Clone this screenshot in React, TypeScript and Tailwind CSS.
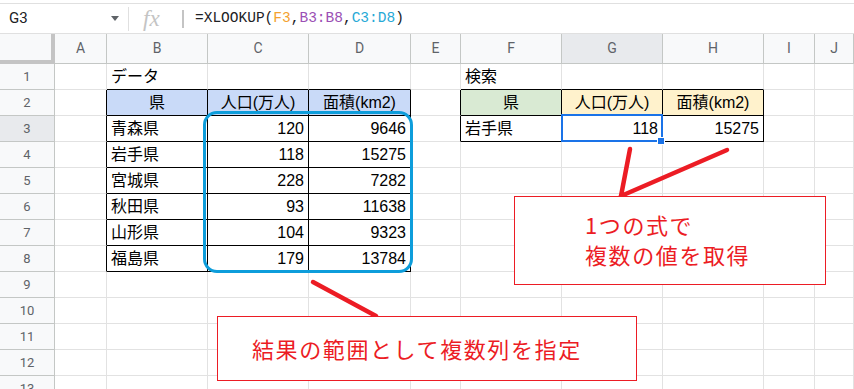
import React from "react";

const cols = ["A", "B", "C", "D", "E", "F", "G", "H", "I", "J"];

type Cell = { text: string; align?: "left" | "center" | "right"; bg?: string };

const cells: Record<string, Cell> = {
  B1: { text: "データ" },
  F1: { text: "検索" },
  B2: { text: "県", align: "center", bg: "bg-[#c9daf8]" },
  C2: { text: "人口(万人)", align: "center", bg: "bg-[#c9daf8]" },
  D2: { text: "面積(km2)", align: "center", bg: "bg-[#c9daf8]" },
  F2: { text: "県", align: "center", bg: "bg-[#d9ead3]" },
  G2: { text: "人口(万人)", align: "center", bg: "bg-[#fff2cc]" },
  H2: { text: "面積(km2)", align: "center", bg: "bg-[#fff2cc]" },
  F3: { text: "岩手県" },
  G3: { text: "118", align: "right" },
  H3: { text: "15275", align: "right" },
};

const prefs = ["青森県", "岩手県", "宮城県", "秋田県", "山形県", "福島県"];
const pops = ["120", "118", "228", "93", "104", "179"];
const areas = ["9646", "15275", "7282", "11638", "9323", "13784"];
prefs.forEach((p, i) => {
  cells["B" + (i + 3)] = { text: p };
  cells["C" + (i + 3)] = { text: pops[i], align: "right" };
  cells["D" + (i + 3)] = { text: areas[i], align: "right" };
});

// c: 1 = A ... 10 = J
function inTable(r: number, c: number) {
  if (r >= 2 && r <= 8 && c >= 2 && c <= 4) return true;
  if (r >= 2 && r <= 3 && c >= 6 && c <= 8) return true;
  return false;
}

function GridCell({ r, c }: { r: number; c: number }) {
  const cell = cells[cols[c - 1] + r];
  const right = inTable(r, c) || inTable(r, c + 1) ? "border-r-black" : "border-r-[#e2e2e2]";
  const bottom = inTable(r, c) || inTable(r + 1, c) ? "border-b-black" : "border-b-[#e2e2e2]";
  const align =
    cell?.align === "center" ? "justify-center" : cell?.align === "right" ? "justify-end" : "justify-start";
  return (
    <div
      className={`h-[26px] border-r border-b ${right} ${bottom} ${cell?.bg ?? "bg-white"} flex items-center ${align} px-[4px] text-[16px] text-black whitespace-nowrap overflow-visible`}
    >
      {cell?.text}
    </div>
  );
}

export default function App() {
  const rows = Array.from({ length: 13 }, (_, i) => i + 1);
  return (
    <div
      className="relative w-[854px] h-[389px] overflow-hidden bg-white"
      style={{ fontFamily: '"Liberation Sans", Arial, "Noto Sans CJK JP", sans-serif' }}
    >
      {/* formula bar */}
      <div className="mt-[3px] h-[31px] border-t border-b border-[#e0e0e0] flex items-center">
        <div className="w-[128px] h-full flex items-center justify-between pl-[9px] pr-[9px] font-['Roboto',sans-serif] text-[15px] text-[#202124]">
          <span>G3</span>
          <span className="w-0 h-0 border-x-[4px] border-x-transparent border-t-[5px] border-t-[#5f6368]" />
        </div>
        <div className="w-px h-[24px] bg-[#e0e0e0]" />
        <div className="ml-[14px] w-[24px] font-['Liberation_Serif',serif] italic text-[23px] leading-none text-[#c4c4c4]">
          fx
        </div>
        <div className="ml-[15px] w-[2px] h-[18px] bg-[#c4c4c4]" />
        <div className="ml-[11px] font-['Liberation_Mono',monospace] text-[14.5px] text-[#202124] whitespace-nowrap">
          =XLOOKUP(<span className="text-[#f4a12f]">F3</span>,<span className="text-[#9b4fb4]">B3:B8</span>,
          <span className="text-[#27a9d6]">C3:D8</span>)
        </div>
      </div>

      {/* grid */}
      <div className="grid grid-cols-[55px_52px_101px_101px_102px_50px_101px_101px_101px_51px_1fr]">
        <div className="h-[30px] bg-[#f8f9fa] border-r-4 border-b-4 border-[#c4c4c4]" />
        {cols.map((c) => (
          <div
            key={c}
            className={`h-[30px] border-r border-b border-[#c4c7c5] flex items-center justify-center font-['Roboto',sans-serif] text-[14px] text-[#5f6368] ${
              c === "G" ? "bg-[#e8eaed]" : "bg-[#f8f9fa]"
            }`}
          >
            {c}
          </div>
        ))}
        {rows.map((r) => (
          <React.Fragment key={r}>
            <div
              className={`h-[26px] border-r border-b border-[#c4c7c5] flex items-center justify-center font-['Roboto',sans-serif] text-[13px] text-[#5f6368] ${
                r === 3 ? "bg-[#e8eaed]" : "bg-[#f8f9fa]"
              }`}
            >
              {r}
            </div>
            {cols.map((_, ci) => (
              <GridCell key={ci} r={r} c={ci + 1} />
            ))}
          </React.Fragment>
        ))}
      </div>

      {/* selected cell G3 */}
      <div className="absolute left-[561px] top-[114px] w-[102px] h-[28px] border-2 border-[#1a73e8]" />
      <div className="absolute left-[657px] top-[137px] w-[8px] h-[8px] bg-[#1a73e8] border border-white" />

      {/* blue range highlight */}
      <div className="absolute left-[203px] top-[111px] w-[210px] h-[162px] border-[3px] border-[#0d9ddb] rounded-[14px]" />

      {/* red arrows */}
      <svg className="absolute inset-0 pointer-events-none" width="854" height="389">
        <g stroke="#ec1c24" strokeWidth="4.5" strokeLinecap="round">
          <line x1="630" y1="149" x2="621" y2="196" />
          <line x1="727" y1="150" x2="621" y2="196" />
          <line x1="313" y1="282" x2="376" y2="316" />
        </g>
      </svg>

      {/* callout boxes */}
      <div
        className="absolute left-[514px] top-[196px] w-[312px] h-[89px] bg-white border border-[#ec1c24] flex flex-col justify-center pl-[70px] pb-[3px] text-[22px] leading-[30px] tracking-[1.6px] text-[#ec1c24]"
        style={{ fontFamily: '"Noto Sans CJK JP", sans-serif' }}
      >
        <div>1つの式で</div>
        <div>複数の値を取得</div>
      </div>
      <div
        className="absolute left-[217px] top-[316px] w-[420px] h-[65px] bg-white border border-[#ec1c24] flex items-center pl-[34px] text-[22px] tracking-[1.6px] text-[#ec1c24]"
        style={{ fontFamily: '"Noto Sans CJK JP", sans-serif' }}
      >
        結果の範囲として複数列を指定
      </div>
    </div>
  );
}
